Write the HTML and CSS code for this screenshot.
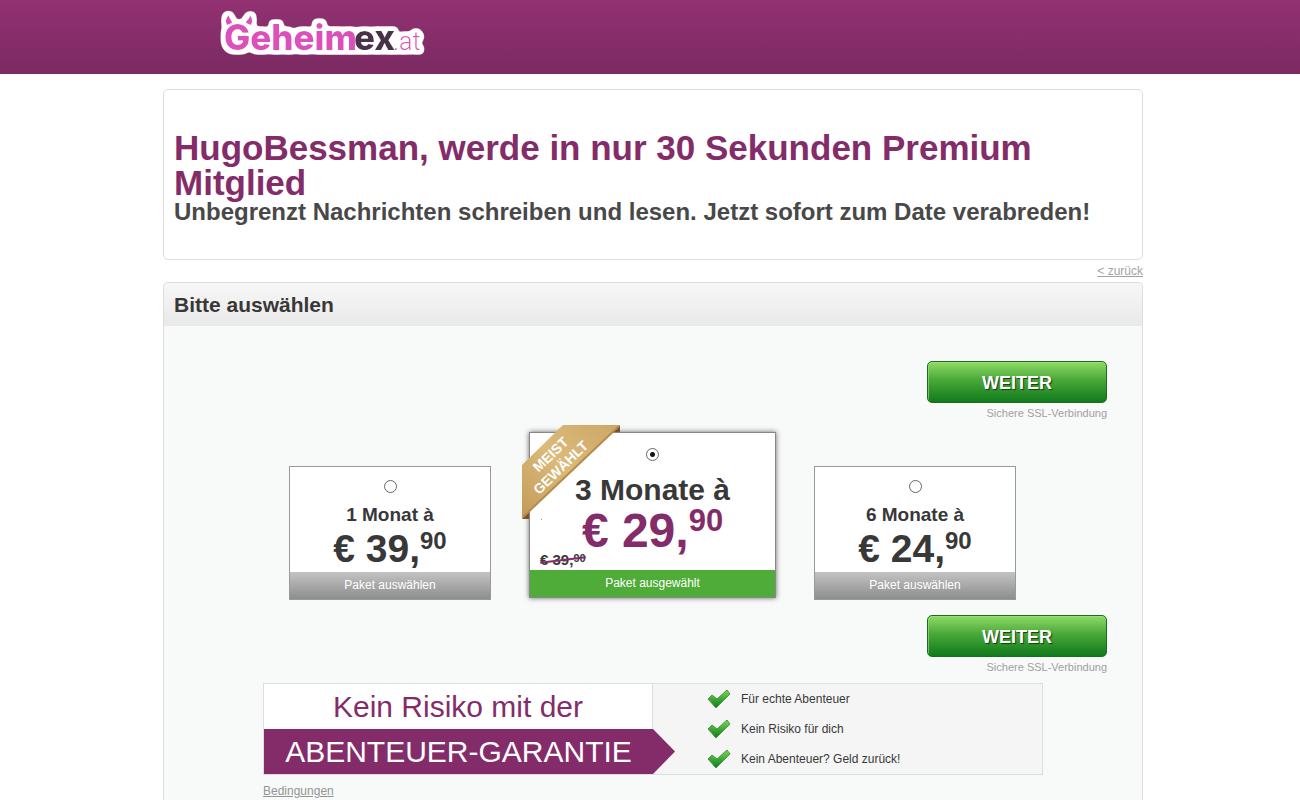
FILE: index.html
```html
<!DOCTYPE html>
<html lang="de">
<head>
  <meta charset="UTF-8">
  <title>Geheimex.at - Premium Mitglied</title>
  <meta name="viewport" content="width=device-width, initial-scale=1.0">
  <link rel="stylesheet" href="styles.css">
</head>
<body>

  <header class="header">
    <div class="wrap">
      <a href="#" class="logo" aria-label="Geheimex.at">
        <svg width="210" height="56" viewBox="0 0 210 56">
          <defs>
            <filter id="outline" x="-5%" y="-20%" width="110%" height="140%">
              <feMorphology in="SourceAlpha" operator="dilate" radius="3"/>
              <feGaussianBlur stdDeviation="2"/>
              <feComponentTransfer result="shape"><feFuncA type="linear" slope="7" intercept="-1"/></feComponentTransfer>
              <feFlood flood-color="#fff"/>
              <feComposite in2="shape" operator="in" result="white"/>
              <feMerge><feMergeNode in="white"/><feMergeNode in="SourceGraphic"/></feMerge>
            </filter>
          </defs>
          <g filter="url(#outline)">
            <path class="logo-pink" d="M8 21C6 17 7 14 10 11c0 4 3 5 3 8zM32 21C34 17 33 14 31 11c0 4-4 5-4 8z"/>
            <text class="logo-pink logo-bold" x="5" y="46">Geheim</text>
            <text class="logo-dark logo-bold" x="135" y="46">ex</text>
            <text class="logo-pink logo-thin" x="174" y="46">.at</text>
          </g>
        </svg>
      </a>
    </div>
  </header>

  <main class="wrap main">
    <section class="intro">
      <h1>HugoBessman, werde in nur 30 Sekunden Premium Mitglied</h1>
      <h2>Unbegrenzt Nachrichten schreiben und lesen. Jetzt sofort zum Date verabreden!</h2>
    </section>

    <a href="#" class="back">&lt; zurück</a>

    <form class="panel">
      <h3 class="panel-title">Bitte auswählen</h3>
      <div class="panel-body">

        <div class="next">
          <button type="submit" class="btn-next">WEITER</button>
          <span class="ssl">Sichere SSL-Verbindung</span>
        </div>

        <div class="packages">
          <div class="package">
            <input type="radio" name="package" id="p1" value="1">
            <label for="p1" class="duration">1 Monat à</label>
            <div class="price">€ 39,<span class="cents">90</span></div>
            <button type="button" class="select">Paket auswählen</button>
          </div>

          <div class="package active">
            <svg class="ribbon" width="100" height="96" viewBox="0 0 100 96" aria-hidden="true">
              <defs>
                <linearGradient id="gold" x1="1" y1="0" x2="0" y2="1">
                  <stop offset="0" stop-color="#cda767"/>
                  <stop offset=".5" stop-color="#dbba7a"/>
                  <stop offset="1" stop-color="#c39a58"/>
                </linearGradient>
              </defs>
              <path fill="#76552a" d="M98 0v7h-9zM0 94h7v-9z"/>
              <path fill="url(#gold)" d="M41 0h57L0 94V40z"/>
              <path fill="none" stroke="#b48c4c" stroke-width="2" d="M97 1L1 92"/>
              <path fill="#999" d="M19 94h1v1h-1z"/>
              <text class="ribbon-text" transform="translate(32 33) rotate(-44)" text-anchor="middle">MEIST</text>
              <text class="ribbon-text" transform="translate(42 46) rotate(-44)" text-anchor="middle">GEWÄHLT</text>
            </svg>
            <input type="radio" name="package" id="p3" value="3" checked>
            <label for="p3" class="duration">3 Monate à</label>
            <div class="price">€ 29,<span class="cents">90</span></div>
            <div class="old-price">€ 39,<span class="cents">90</span></div>
            <button type="button" class="select">Paket ausgewählt</button>
          </div>

          <div class="package">
            <input type="radio" name="package" id="p6" value="6">
            <label for="p6" class="duration">6 Monate à</label>
            <div class="price">€ 24,<span class="cents">90</span></div>
            <button type="button" class="select">Paket auswählen</button>
          </div>
        </div>

        <div class="next">
          <button type="submit" class="btn-next">WEITER</button>
          <span class="ssl">Sichere SSL-Verbindung</span>
        </div>

        <div class="guarantee-wrap">
          <div class="guarantee">
            <div class="guarantee-title">
              <div class="line-top">Kein Risiko mit der</div>
              <div class="line-bottom">ABENTEUER-GARANTIE</div>
            </div>
            <ul class="benefits">
              <li>
                <svg class="check" width="24" height="20" viewBox="0 0 24 20" aria-hidden="true">
                  <defs>
                    <linearGradient id="green" x1="0" y1="0" x2="0" y2="1">
                      <stop offset="0" stop-color="#7bd956"/>
                      <stop offset=".5" stop-color="#3fa935"/>
                      <stop offset="1" stop-color="#0f7a1a"/>
                    </linearGradient>
                  </defs>
                  <path fill="url(#green)" stroke="#4a9446" stroke-linejoin="round" d="M1 10l4-4 5 4L20 1l3 4L9 19z"/>
                </svg>
                Für echte Abenteuer
              </li>
              <li>
                <svg class="check" width="24" height="20" viewBox="0 0 24 20" aria-hidden="true">
                  <path fill="url(#green)" stroke="#4a9446" stroke-linejoin="round" d="M1 10l4-4 5 4L20 1l3 4L9 19z"/>
                </svg>
                Kein Risiko für dich
              </li>
              <li>
                <svg class="check" width="24" height="20" viewBox="0 0 24 20" aria-hidden="true">
                  <path fill="url(#green)" stroke="#4a9446" stroke-linejoin="round" d="M1 10l4-4 5 4L20 1l3 4L9 19z"/>
                </svg>
                Kein Abenteuer? Geld zurück!
              </li>
            </ul>
          </div>
          <a href="#" class="terms">Bedingungen</a>
        </div>

      </div>
    </form>
  </main>

</body>
</html>
```
FILE: styles.css
```css
* {
  box-sizing: border-box;
}
body {
  margin: 0;
  min-height: 100vh;
  display: flex;
  flex-direction: column;
  background: #fff;
  color: #383838;
  font-family: "Liberation Sans", Arial, sans-serif;
  font-size: 12px;
}
h1, h2, h3, ul {
  margin: 0;
  padding: 0;
}
button {
  font-family: inherit;
  cursor: pointer;
}
.wrap {
  width: 100%;
  max-width: 986px;
  margin: 0 auto;
  padding-left: 6px;
}

/* header */
.header {
  height: 74px;
  background: linear-gradient(#923173, #7b2a62);
}
.logo {
  display: block;
  padding: 4px 0 0 56px;
}
.logo svg {
  display: block;
}
.logo-bold {
  font: 800 35px Inter, sans-serif;
}
.logo-thin {
  font: 300 25px Roboto, sans-serif;
}
.logo-pink {
  fill: #dd50bd;
}
.logo-dark {
  fill: #46304a;
}

/* intro */
.main {
  flex: 1;
  display: flex;
  flex-direction: column;
  padding-top: 15px;
}
.intro {
  padding: 40px 10px 35px;
  border: 1px solid #ddd;
  border-radius: 5px;
}
.intro h1 {
  color: #842c6a;
  font-size: 35px;
  line-height: 35px;
}
.intro h2 {
  color: #484848;
  font-size: 24px;
  line-height: 24px;
}
.back {
  align-self: flex-end;
  padding: 3px 0;
  line-height: 16px;
  color: #a3a3a3;
}

/* panel */
.panel {
  flex: 1;
  border: 1px solid #ddd;
  border-bottom: 0;
  border-radius: 5px 5px 0 0;
  background: #f8faf9;
}
.panel-title {
  padding: 0 10px;
  border-radius: 4px 4px 0 0;
  background: linear-gradient(#f7f7f7, #e9e9e9);
  font-size: 21px;
  line-height: 43px;
}
.panel-body {
  padding-top: 35px;
}
.next {
  display: flex;
  flex-direction: column;
  align-items: flex-end;
  padding-right: 35px;
}
.btn-next {
  width: 180px;
  height: 42px;
  padding: 2px 0 0;
  border: 1px solid #1c6b22;
  border-radius: 5px;
  background: linear-gradient(#8fdb66, #49a838 45%, #117a1c);
  box-shadow: inset 1px 1px 0 rgba(160, 230, 120, 0.6);
  color: #fff;
  font-size: 18px;
  font-weight: bold;
  text-shadow: 1px 1px 1px #123c10;
}
.ssl {
  color: #a0a0a0;
  font-size: 11px;
  line-height: 20px;
}

/* packages */
.packages {
  display: flex;
  justify-content: center;
  align-items: flex-end;
  gap: 38px;
  padding: 9px 1px 15px 0;
}
.package {
  width: 202px;
  display: flex;
  flex-direction: column;
  align-items: center;
  padding-top: 13px;
  border: 1px solid #999;
  background: #fff;
  font-weight: bold;
}
.package input {
  appearance: none;
  width: 13px;
  height: 13px;
  margin: 0 0 11px;
  border: 1px solid #666;
  border-radius: 50%;
  background: #fff;
}
.package input:checked {
  background: radial-gradient(circle, #111 2px, #fff 3px);
}
.duration {
  font-size: 19px;
  line-height: 22px;
}
.price {
  font-size: 39px;
  line-height: 46px;
}
.cents {
  font-size: 24px;
  line-height: 0;
  vertical-align: 13px;
}
.select {
  width: 100%;
  height: 27px;
  padding: 0 0 2px;
  border: 0;
  background: linear-gradient(#c3c3c3, #8d8d8d);
  color: #fff;
  font-size: 12px;
}
.package.active {
  position: relative;
  width: 247px;
  margin-bottom: 2px;
  padding-top: 15px;
  border-color: #888;
  box-shadow: 0 0 5px #666;
}
.active .duration {
  font-size: 30px;
  line-height: 36px;
}
.active .price {
  color: #842c6a;
  font-size: 48px;
  line-height: 45px;
}
.active .price .cents {
  font-size: 31px;
  vertical-align: 16px;
}
.active .select {
  background: #4fac38;
}
.old-price {
  position: relative;
  align-self: flex-start;
  margin: 0 0 3px 10px;
  font-size: 15px;
  line-height: 14px;
}
.old-price .cents {
  font-size: 11px;
  vertical-align: 3px;
}
.old-price::after {
  content: "";
  position: absolute;
  left: 0;
  top: 6px;
  width: 100%;
  height: 2px;
  background: #842c6a;
  transform: rotate(-7deg);
}
.ribbon {
  position: absolute;
  left: -8px;
  top: -8px;
}
.ribbon-text {
  fill: #fff;
  font-size: 14px;
  font-weight: bold;
}

/* guarantee */
.guarantee-wrap {
  padding: 6px 99px 0;
}
.guarantee {
  display: grid;
  grid-template-columns: 1fr 1fr;
  border: 1px solid #ddd;
  background: #f5f5f5;
}
.guarantee-title {
  font-size: 30px;
  line-height: 45px;
  text-align: center;
}
.line-top {
  border-right: 1px solid #ddd;
  background: #fff;
  color: #842c6a;
}
.line-bottom {
  position: relative;
  background: #842c6a;
  color: #fff;
}
.line-bottom::after {
  content: "";
  position: absolute;
  left: 100%;
  top: 0;
  width: 22px;
  height: 100%;
  background: #842c6a;
  clip-path: polygon(0 0, 100% 50%, 0 100%);
}
.benefits {
  padding-left: 54px;
  list-style: none;
}
.benefits li {
  display: flex;
  align-items: center;
  gap: 10px;
  height: 30px;
}
.terms {
  display: inline-block;
  margin-top: 8px;
  line-height: 16px;
  color: #949494;
}
```
